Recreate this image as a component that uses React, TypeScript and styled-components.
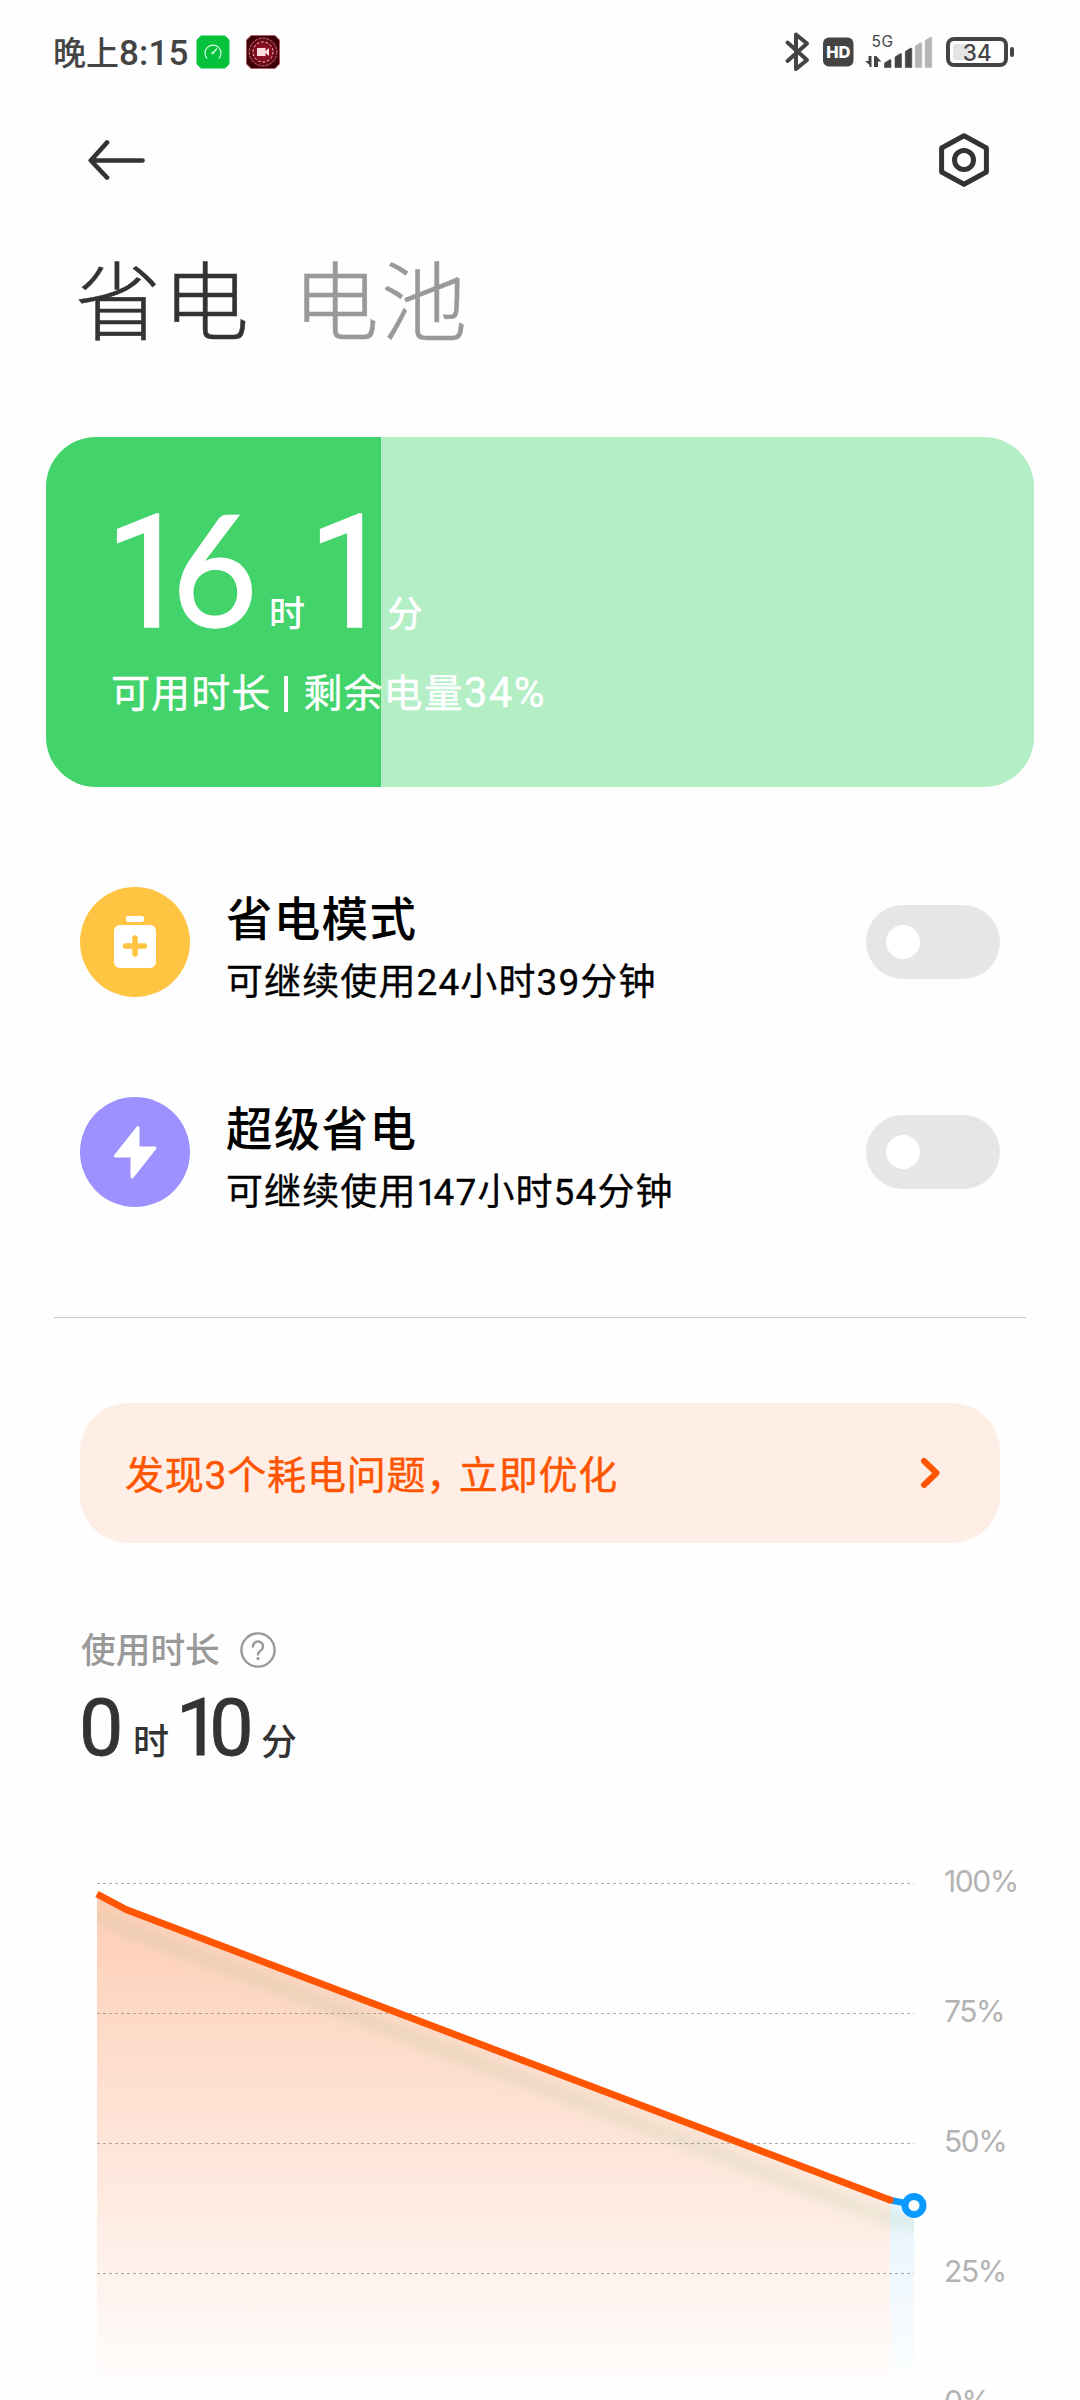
import React from 'react';
import styled, { createGlobalStyle } from 'styled-components';

const GlobalStyle = createGlobalStyle`
  * { box-sizing: border-box; }
  body { margin: 0; background: #fff; }
`;

const cjk = '"Noto Sans CJK SC", sans-serif';
const base = `Roboto, ${cjk}`;

const Screen = styled.main`
  width: 1080px;
  height: 2400px;
  overflow: hidden;
  background: #fefefe;
  color: #333;
  font-family: ${base};
  white-space: nowrap;
  display: flex;
  flex-direction: column;
`;

const StatusBar = styled.div`
  height: 104px;
  padding: 0 66px 0 53px;
  display: flex;
  justify-content: space-between;
  align-items: center;
  color: #444;
`;

const StatusGroup = styled.div`
  display: flex;
  align-items: center;
`;

const Clock = styled.span`
  font-size: 33px;
  line-height: 40px;
  font-weight: 500;
  width: 143px;
  padding-top: 3px;
`;

const ClockDigits = styled.span`
  font-size: 35px;
  letter-spacing: 0.2px;
`;

const AppBadge = styled.svg`
  width: 34px;
  height: 34px;
  margin-right: 16px;
`;

const StatusIcons = styled.svg`
  width: 230px;
  height: 44px;
  display: block;
  font-family: Inter, sans-serif;
`;

const Toolbar = styled.header`
  height: 112px;
  padding: 0 91px 0 88px;
  display: flex;
  justify-content: space-between;
  align-items: center;
`;

const ToolIcon = styled.svg<{ $w: number; $h: number }>`
  width: ${p => p.$w}px;
  height: ${p => p.$h}px;
  display: block;
`;

const Tabs = styled.nav`
  height: 221px;
  padding: 38px 0 0 75px;
  display: flex;
  gap: 42px;
`;

const Tab = styled.span<{ $active?: boolean }>`
  font-family: ${cjk};
  font-size: 86px;
  line-height: 86px;
  font-weight: 300;
  letter-spacing: 2px;
  -webkit-text-stroke: 0.5px;
  color: ${p => (p.$active ? '#333' : '#999')};
`;

const BatteryCard = styled.section<{ $level: number }>`
  height: 350px;
  margin: 0 46px;
  padding: 80px 0 0 65px;
  border-radius: 50px;
  color: #fff;
  background: linear-gradient(to right, #42d36a ${p => p.$level}%, #b3eec5 ${p => p.$level}%);
`;

const Duration = styled.div<{ $h: number; $gap: number }>`
  display: flex;
  align-items: baseline;
  height: ${p => p.$h}px;
  margin-top: ${p => p.$gap}px;
`;

const Figure = styled.span<{ $size: number; $w: number; $shift?: number; $narrow?: number }>`
  font-size: ${p => p.$size}px;
  line-height: ${p => p.$size * 0.714}px;
  width: ${p => p.$w}px;
  text-indent: ${p => -(p.$shift ?? 0)}px;
  font-weight: 400;
  -webkit-text-stroke: ${p => p.$size / 95}px;
  transform: scaleX(${p => p.$narrow ?? 1});
  transform-origin: left;
`;

/* The figure one takes less room than the others. */
const One = styled.span<{ $trim: number }>`
  letter-spacing: -${p => p.$trim}em;
`;

const Rounded = styled.span`
  font-family: Lato, sans-serif;
  font-size: 0.99em;
  line-height: 0;
`;

const Unit = styled.span<{ $w: number }>`
  font-family: ${cjk};
  font-size: 36px;
  line-height: 36px;
  width: ${p => p.$w}px;
  font-weight: 500;
`;

const CardCaption = styled.div`
  margin-top: 41px;
  font-size: 39px;
  line-height: 48px;
  letter-spacing: 1.1px;
  -webkit-text-stroke: 0.4px;
`;

const Percent = styled.span`
  font-size: 42px;
  line-height: 0;
  letter-spacing: 1.4px;
`;

const Bar = styled.i`
  display: inline-block;
  width: 4px;
  height: 36px;
  margin: 0 15px 0 13px;
  vertical-align: -5px;
  background: #fff;
`;

const ModeList = styled.section`
  height: 530px;
  padding: 100px 80px 0;
  display: flex;
  flex-direction: column;
  gap: 100px;
`;

const ModeRow = styled.div`
  height: 110px;
  display: flex;
  align-items: center;
`;

const ModeIcon = styled.svg`
  width: 110px;
  height: 110px;
  flex: none;
`;

const ModeText = styled.div`
  flex: 1;
  margin-left: 36px;
  padding-top: 9px;
  color: #000;
`;

const ModeTitle = styled.div`
  font-family: ${cjk};
  font-size: 46.5px;
  line-height: 60px;
  font-weight: 500;
  letter-spacing: 1.3px;
`;

const ModeDesc = styled.div`
  font-size: 37px;
  line-height: 48px;
  margin-top: 13px;
  letter-spacing: 1.1px;
  -webkit-text-stroke: 0.3px;
`;

const Toggle = styled.span`
  width: 134px;
  height: 74px;
  border-radius: 37px;
  padding: 20px;
  background: #e6e6e6;
`;

const Knob = styled.span`
  display: block;
  width: 34px;
  height: 34px;
  border-radius: 50%;
  background: #fff;
`;

const Divider = styled.hr`
  width: 972px;
  height: 1px;
  margin: 0 auto;
  border: 0;
  background: #cbcbcb;
`;

const Notice = styled.section`
  height: 140px;
  margin: 85px 80px 0;
  padding: 0 60px 0 45px;
  border-radius: 48px;
  background: #ffeee6;
  color: #ff5500;
  display: flex;
  align-items: center;
  justify-content: space-between;
`;

const NoticeText = styled.span`
  font-size: 39px;
  letter-spacing: 0.8px;
  padding-bottom: 3px;
  -webkit-text-stroke: 0.4px;
`;

const Comma = styled.span`
  letter-spacing: -6.5px;
`;

const Usage = styled.section`
  height: 335px;
  padding: 84px 80px 0 81px;
`;

const UsageLabel = styled.div`
  height: 46px;
  display: flex;
  align-items: center;
  gap: 20px;
  font-size: 34.7px;
  line-height: 42px;
  font-weight: 500;
  color: #999;
`;

const LabelText = styled.span`
  padding-top: 2px;
`;

const Chart = styled.section`
  display: flex;
  height: 522px;
`;

const Plot = styled.svg`
  width: 944px;
  height: 522px;
  flex: none;
`;

const Scale = styled.div`
  display: flex;
  flex-direction: column;
  font-family: Inter, sans-serif;
  font-size: 30px;
  line-height: 130px;
  letter-spacing: -1.4px;
  color: #b3b3b3;
  margin-top: -62px;
`;

const modes = [
  { title: '省电模式', desc: '可继续使用24小时39分钟', kind: 'saver' },
  { title: '超级省电', desc: '可继续使用147小时54分钟', kind: 'ultra' },
];

const Figures = ({ text, trim }: { text: string; trim: number }) => (
  <>
    {text.split(/(1)/).map((part, i) => (part === '1' ? <One key={i} $trim={trim}>1</One> : part))}
  </>
);

const SaverGlyph = () => (
  <>
    <circle cx="55" cy="55" r="55" fill="#ffc542" />
    <rect x="46" y="29" width="18" height="6" rx="2" fill="#fff" />
    <rect x="34" y="38" width="42" height="43" rx="6" fill="#fff" />
    <path d="M55 51v16M45.500 59h19" stroke="#ffc542" strokeWidth="5.500" strokeLinecap="round" />
  </>
);

const UltraGlyph = () => (
  <>
    <circle cx="55" cy="55" r="55" fill="#9c91ff" />
    <path d="M58 30.500L35.500 59H52V80L75 51H58Z" fill="#fff" stroke="#fff" strokeWidth="3" strokeLinejoin="round" />
  </>
);

const signal = [
  { x: 884.5, top: 60, on: true },
  { x: 895, top: 54, on: true },
  { x: 905.3, top: 48.5, on: true },
  { x: 915.3, top: 43, on: false },
  { x: 925.2, top: 37.5, on: false },
];

const gridLines = [5.5, 135.5, 265.5, 395.5];

export default function App() {
  return (
    <Screen>
      <GlobalStyle />
      <StatusBar>
        <StatusGroup>
          <Clock>晚上<ClockDigits>8:15</ClockDigits></Clock>
          <AppBadge viewBox="0 0 34 34">
            <path d="M5 .5h24l4.500 4.500v24L29 33.500H5L.5 29V5z" fill="#06c13c" />
            <path d="M11 23.500a8 8 0 1 1 12 0M16.500 18.500l4.500-5" fill="none" stroke="#d8ffe0" strokeWidth="1.2" />
            <circle cx="16.800" cy="18" r="1.300" fill="#d8ffe0" />
          </AppBadge>
          <AppBadge viewBox="0 0 34 34">
            <defs>
              <radialGradient id="rec">
                <stop offset="0" stopColor="#a0182a" />
                <stop offset=".6" stopColor="#780c1a" />
                <stop offset="1" stopColor="#3a0008" />
              </radialGradient>
            </defs>
            <path d="M5 .5h24l4.500 4.500v24L29 33.500H5L.5 29V5z" fill="url(#rec)" stroke="#c05560" strokeWidth=".8" />
            <circle cx="17" cy="17" r="13.800" fill="none" stroke="#e08a90" strokeWidth=".8" strokeDasharray="3 1" />
            <circle cx="17" cy="17" r="10" fill="none" stroke="#ffd0d4" strokeWidth="1" strokeDasharray="2.500 2" />
            <path d="M11 13h8.500v3l3.500-3v8l-3.500-3v3H11z" fill="#ffdcde" />
          </AppBadge>
        </StatusGroup>
        <StatusIcons viewBox="784 30 230 44">
          <path d="M787.500 42.500l19.500 17.500L796 69V34.500L807 43.500 787.500 61" fill="none" stroke="#444" strokeWidth="4" strokeLinejoin="round" strokeLinecap="round" />
          <rect x="823" y="37.500" width="30.500" height="29" rx="6" fill="#444" />
          <text x="838.300" y="58" fontSize="16.500" fontWeight="800" fill="#fff" textAnchor="middle">HD</text>
          <text x="871.500" y="46.800" fontSize="15.500" fill="#444" letterSpacing=".6">5G</text>
          <path d="M871.500 56v11h-2v-2l-4.500-4h3.500v-5zM874 67V56h2.300l5 5.500h-3.300V67z" fill="#444" />
          {signal.map(b => (
            <path key={b.x} d={`M${b.x} 67.500V${b.top + 3}l5-3.200h1.500V67.500z`} fill={b.on ? '#444' : '#b4b4b4'} stroke={b.on ? '#444' : '#b4b4b4'} strokeWidth=".6" strokeLinejoin="round" />
          ))}
          <rect x="948" y="39" width="58" height="26" rx="6" fill="none" stroke="#444" strokeWidth="4" />
          <rect x="953" y="44" width="17" height="16" rx="3" fill="#e4e4e4" />
          <text x="977.300" y="61" fontSize="22.500" fontWeight="450" fill="#444" textAnchor="middle">34</text>
          <rect x="1010" y="47" width="4" height="10" rx="2" fill="#444" />
        </StatusIcons>
      </StatusBar>

      <Toolbar>
        <ToolIcon $w={58} $h={42} viewBox="0 0 58 42">
          <path d="M54.500 21.500H3M19 3.500L2.800 21.500 19 38.500" fill="none" stroke="#333" strokeWidth="4.700" strokeLinecap="round" strokeLinejoin="round" />
        </ToolIcon>
        <ToolIcon $w={50} $h={54} viewBox="0 0 50 54">
          <path d="M25 2.700L47.400 15v24L25 51.300 2.600 39V15z" fill="none" stroke="#333" strokeWidth="5" strokeLinejoin="round" />
          <circle cx="25" cy="27" r="9.500" fill="none" stroke="#333" strokeWidth="5" />
        </ToolIcon>
      </Toolbar>

      <Tabs>
        <Tab $active>省电</Tab>
        <Tab>电池</Tab>
      </Tabs>

      <BatteryCard $level={33.9}>
        <Duration $h={112} $gap={0}>
          <Figure $size={157} $w={158} $shift={6} $narrow={0.95}><One $trim={0.115}>1</One><Rounded>6</Rounded></Figure>
          <Unit $w={46}>时</Unit>
          <Figure $size={157} $w={72} $shift={7} $narrow={0.95}><One $trim={0.12}>1</One></Figure>
          <Unit $w={40}>分</Unit>
        </Duration>
        <CardCaption>可用时长<Bar />剩余电量<Percent>34%</Percent></CardCaption>
      </BatteryCard>

      <ModeList>
        {modes.map(m => (
          <ModeRow key={m.kind}>
            <ModeIcon viewBox="0 0 110 110">{m.kind === 'saver' ? <SaverGlyph /> : <UltraGlyph />}</ModeIcon>
            <ModeText>
              <ModeTitle>{m.title}</ModeTitle>
              <ModeDesc><Figures text={m.desc} trim={0.1} /></ModeDesc>
            </ModeText>
            <Toggle><Knob /></Toggle>
          </ModeRow>
        ))}
      </ModeList>

      <Divider />

      <Notice>
        <NoticeText>发现3个耗电问题<Comma>，</Comma>立即优化</NoticeText>
        <ToolIcon $w={20} $h={32} viewBox="0 0 20 32">
          <path d="M4 4l12.500 12L4 28" fill="none" stroke="#ff5500" strokeWidth="6" strokeLinecap="round" strokeLinejoin="round" />
        </ToolIcon>
      </Notice>

      <Usage>
        <UsageLabel>
          <LabelText>使用时长</LabelText>
          <ToolIcon $w={36} $h={36} viewBox="0 0 36 36">
            <circle cx="18" cy="18" r="16.600" fill="none" stroke="#999" strokeWidth="2.400" />
            <path d="M13 14.500a5 5 0 1 1 7.800 4.100c-1.800 1.200-2.800 2-2.800 4" fill="none" stroke="#999" strokeWidth="2.400" strokeLinecap="round" />
            <circle cx="18" cy="26.500" r="1.600" fill="#999" />
          </ToolIcon>
        </UsageLabel>
        <Duration $h={60} $gap={27}>
          <Figure $size={79} $w={52} $shift={2}>0</Figure>
          <Unit $w={45}>时</Unit>
          <Figure $size={79} $w={83} $shift={2}><One $trim={0.14}>1</One>0</Figure>
          <Unit $w={40}>分</Unit>
        </Duration>
      </Usage>

      <Chart>
        <Plot viewBox="0 0 944 522">
          <defs>
            <linearGradient id="used" gradientUnits="userSpaceOnUse" x1="0" y1="16" x2="0" y2="520">
              <stop offset="0" stopColor="#ff5500" stopOpacity=".29" />
              <stop offset="1" stopColor="#ff5500" stopOpacity="0" />
            </linearGradient>
            <linearGradient id="now" gradientUnits="userSpaceOnUse" x1="0" y1="16" x2="0" y2="520">
              <stop offset="0" stopColor="#0a99ff" stopOpacity=".24" />
              <stop offset="1" stopColor="#0a99ff" stopOpacity="0" />
            </linearGradient>
            <clipPath id="area"><path d="M97 16L126 31.500 892 322.500 914 327V522H97z" /></clipPath>
            <filter id="soft" x="-5%" y="-10%" width="110%" height="120%"><feGaussianBlur stdDeviation="5.500" /></filter>
          </defs>
          <path d="M97 16L126 31.500 890 322V522H97z" fill="url(#used)" />
          <path d="M890 322L914 327V522H890z" fill="url(#now)" />
          <g clipPath="url(#area)">
            <path d="M80 29L126 51 890 341.500 930 347" fill="none" stroke="#8fc080" strokeOpacity=".17" strokeWidth="14" filter="url(#soft)" />
          </g>
          {gridLines.map(y => (
            <path key={y} d={`M97 ${y}H914`} stroke="#777" strokeOpacity=".6" strokeWidth="1" strokeDasharray="3 3" />
          ))}
          <path d="M890 322L914 327" stroke="#0a99ff" strokeWidth="6.500" />
          <path d="M97 16L126 31.500 890 322" fill="none" stroke="#ff5500" strokeWidth="7" strokeLinejoin="round" />
          <circle cx="890" cy="322" r="3.500" fill="#ff5500" />
          <circle cx="914" cy="327.500" r="9" fill="#fff" stroke="#0a99ff" strokeWidth="7" />
        </Plot>
        <Scale>
          <span>100%</span>
          <span>75%</span>
          <span>50%</span>
          <span>25%</span>
          <span>0%</span>
        </Scale>
      </Chart>
    </Screen>
  );
}
